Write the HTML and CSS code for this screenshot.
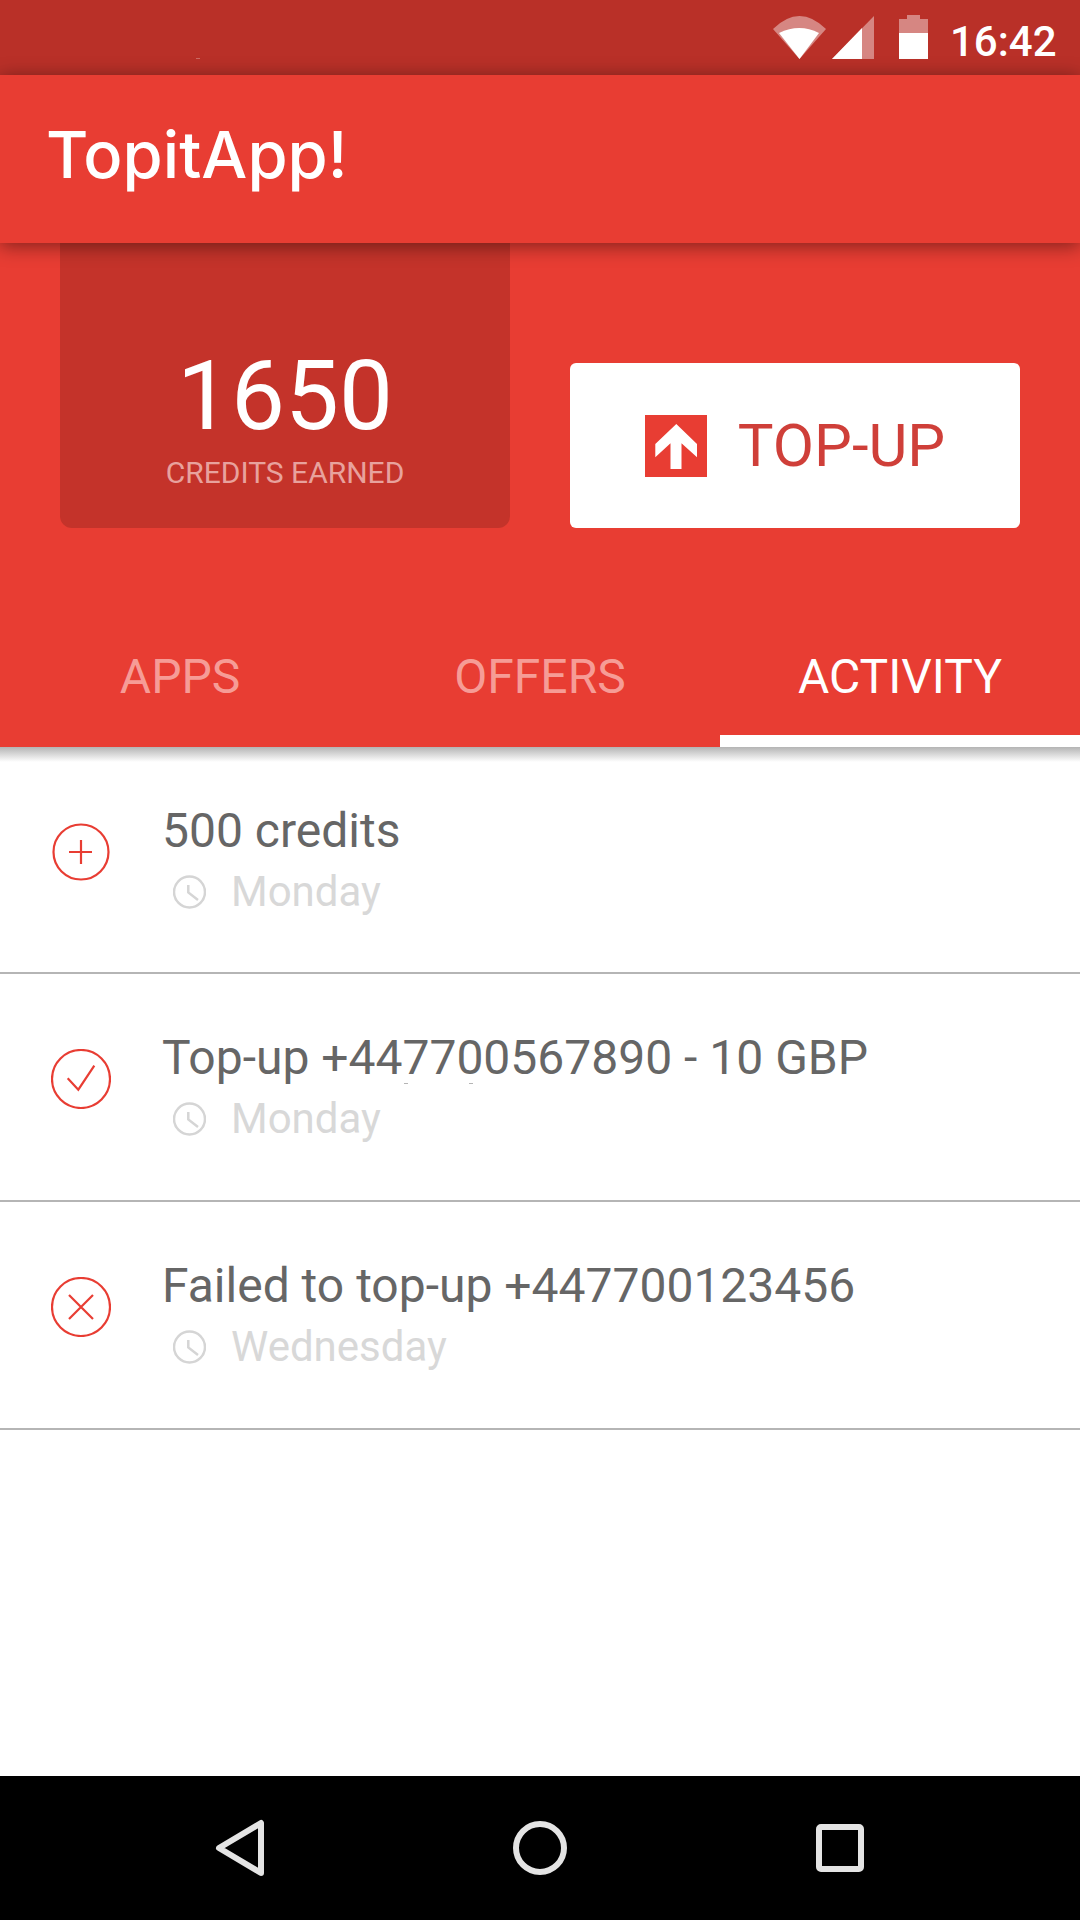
FILE: index.html
```html
<!DOCTYPE html>
<html lang="en">

<head>
    <meta charset="UTF-8">
    <meta name="viewport" content="width=device-width, initial-scale=1.0">
    <title>TopitApp!</title>
    <link rel="stylesheet" href="styles.css">
</head>

<body>
    <div class="status-bar">
        <span class="speck status-speck"></span>
        <svg class="status-icon" width="53" height="43" viewBox="0 0 53 43">
            <path class="dim" d="M0 13 Q26.500 -13 53 13 L26.500 43 Z" />
            <path class="solid" d="M6 17 Q26.500 7 46 17 L26.500 43 Z" />
        </svg>
        <svg class="status-icon" width="42" height="43" viewBox="0 0 42 43">
            <path class="dim" d="M42 0 V43 H0 Z" />
            <path class="solid" d="M30 12 V43 H0 Z" />
        </svg>
        <svg class="status-icon battery" width="29" height="44" viewBox="0 0 29 44">
            <path class="dim" d="M8 0 H21 V4 H29 V18 H0 V4 H8 Z" />
            <rect class="solid" x="0" y="18" width="29" height="26" />
        </svg>
        <span class="clock-text">16:42</span>
    </div>

    <header class="app-bar">
        <h1>TopitApp!</h1>
    </header>

    <section class="hero">
        <div class="credits-card">
            <div class="credits-value">1650</div>
            <div class="credits-label">CREDITS EARNED</div>
        </div>
        <button class="topup-button" type="button">
            <svg width="62" height="62" viewBox="0 0 62 62">
                <rect width="62" height="62" fill="#e83d33" />
                <path fill="#fff" d="M31.300 9 L52 29 V42.300 L36.500 28.300 V54 H25.500 V28.300 L10.300 42.300 V29 Z" />
            </svg>
            <span>TOP-UP</span>
        </button>
    </section>

    <nav class="tabs">
        <div class="tab">APPS</div>
        <div class="tab">OFFERS</div>
        <div class="tab active">ACTIVITY</div>
    </nav>

    <main class="activity">
        <div class="row">
            <svg class="row-icon" width="60" height="60" viewBox="0 0 60 60">
                <circle cx="30" cy="30" r="27.500" />
                <path d="M18 30 H41 M30 18 V42" />
            </svg>
            <div class="row-text">
                <div class="row-title">500 credits</div>
                <div class="row-time">
                    <svg width="33" height="34" viewBox="0 0 33 34">
                        <circle cx="16.500" cy="17" r="15.500" />
                        <path d="M15.300 10 V17.500 L25 25" />
                    </svg>
                    <span>Monday</span>
                </div>
            </div>
        </div>
        <div class="row">
            <svg class="row-icon" width="60" height="60" viewBox="0 0 60 60">
                <circle cx="30" cy="30" r="29" />
                <path d="M16.700 29.300 L27.300 40.700 L43.300 16.700" />
            </svg>
            <div class="row-text">
                <div class="row-title">Top-up +447700567890 - 10 GBP</div>
                <span class="speck title-speck-a"></span>
                <span class="speck title-speck-b"></span>
                <div class="row-time">
                    <svg width="33" height="34" viewBox="0 0 33 34">
                        <circle cx="16.500" cy="17" r="15.500" />
                        <path d="M15.300 10 V17.500 L25 25" />
                    </svg>
                    <span>Monday</span>
                </div>
            </div>
        </div>
        <div class="row">
            <svg class="row-icon" width="60" height="60" viewBox="0 0 60 60">
                <circle cx="30" cy="30" r="29" />
                <path d="M18 18 L42 42 M42 18 L18 42" />
            </svg>
            <div class="row-text">
                <div class="row-title">Failed to top-up +447700123456</div>
                <div class="row-time">
                    <svg width="33" height="34" viewBox="0 0 33 34">
                        <circle cx="16.500" cy="17" r="15.500" />
                        <path d="M15.300 10 V17.500 L25 25" />
                    </svg>
                    <span>Wednesday</span>
                </div>
            </div>
        </div>
    </main>

    <footer class="nav-bar">
        <svg width="50" height="58" viewBox="0 0 50 58">
            <path d="M46 4 V54 L4 29 Z" />
        </svg>
        <svg width="54" height="54" viewBox="0 0 54 54">
            <circle cx="27" cy="27" r="24" />
        </svg>
        <svg width="48" height="48" viewBox="0 0 48 48">
            <rect x="3" y="3" width="42" height="42" rx="2" />
        </svg>
    </footer>
</body>

</html>
```

FILE: styles.css
```css
* {
    box-sizing: border-box;
}

body {
    position: relative;
    margin: 0;
    width: 1080px;
    height: 1920px;
    display: flex;
    flex-direction: column;
    font-family: 'Roboto', sans-serif;
    background-color: #fff;
    overflow: hidden;
}

.status-bar {
    height: 75px;
    flex: none;
    display: flex;
    align-items: flex-start;
    padding: 15px 0 0 773px;
    background-color: #b93028;
    color: #fff;
}

.status-icon {
    margin-right: 6px;
    margin-top: 1px;
}

.status-icon .dim {
    fill: rgba(255, 255, 255, 0.42);
}

.status-icon .solid {
    fill: #fff;
}

.status-icon.battery {
    margin: 0 22px 0 19px;
}

.clock-text {
    font-size: 42px;
    font-weight: 500;
    line-height: 49px;
    margin-top: 2px;
}

/* stray marks that are in the screenshot */
.speck {
    position: absolute;
    width: 4px;
    height: 1px;
    background-color: #b5b5b5;
}

.status-speck {
    left: 196px;
    top: 58px;
    background-color: #cc6a63;
}

.title-speck-a {
    left: 404px;
    top: 1083px;
}

.title-speck-b {
    left: 469px;
    top: 1083px;
}

.app-bar {
    position: relative;
    z-index: 2;
    height: 168px;
    flex: none;
    display: flex;
    align-items: center;
    padding: 0 0 9px 46px;
    background-color: #e83d33;
    box-shadow: 0 3px 18px rgba(0, 0, 0, 0.45);
}

.app-bar h1 {
    margin: 0;
    font-family: 'Inter', sans-serif;
    font-size: 65px;
    font-weight: 500;
    line-height: 70px;
    color: #fff;
}

.hero {
    height: 285px;
    flex: none;
    display: flex;
    align-items: flex-end;
    gap: 60px;
    padding: 0 60px;
    background-color: #e83d33;
}

.credits-card {
    width: 450px;
    height: 285px;
    padding-top: 97px;
    border-radius: 0 0 12px 12px;
    background-color: #c4332a;
    color: #fff;
    text-align: center;
}

.credits-value {
    font-size: 96px;
    line-height: 112px;
}

.credits-label {
    font-size: 30px;
    line-height: 35px;
    margin-top: 3px;
    color: #e8a29d;
}

.topup-button {
    width: 450px;
    height: 165px;
    display: flex;
    align-items: center;
    justify-content: center;
    gap: 31px;
    padding: 0;
    border: none;
    border-radius: 6px;
    background-color: #fff;
    font-family: inherit;
    font-size: 60px;
    color: #cf3f39;
}

.tabs {
    height: 219px;
    flex: none;
    display: grid;
    grid-template-columns: repeat(3, 1fr);
    background-color: #e83d33;
}

.tab {
    height: 107px;
    margin-top: 112px;
    padding-top: 9px;
    border-bottom: 12px solid transparent;
    font-size: 48px;
    line-height: 56px;
    text-align: center;
    color: #f69c96;
}

.tab.active {
    border-bottom-color: #fff;
    color: #fff;
}

.activity {
    flex: 1;
    background: linear-gradient(#b4b4b4, #fff) top / 100% 15px no-repeat;
}

.row {
    height: 228px;
    display: flex;
    align-items: flex-start;
    padding-left: 51px;
    border-bottom: 2px solid #b5b5b5;
}

.row:first-child {
    height: 227px;
}

.row-icon {
    flex: none;
    margin-top: 75px;
}

.row-icon circle,
.row-icon path {
    fill: none;
    stroke: #e83d33;
    stroke-width: 2.200;
}

.row-text {
    margin-left: 51px;
    padding-top: 56px;
}

.row-title {
    font-size: 48px;
    line-height: 56px;
    color: #666;
}

.row-time {
    display: flex;
    align-items: center;
    gap: 25px;
    margin-top: 8px;
    padding-left: 11px;
    font-size: 42px;
    line-height: 49px;
    color: #d8d8d8;
}

.row-time circle,
.row-time path {
    fill: none;
    stroke: #d5d5d5;
    stroke-width: 2.500;
}

.nav-bar {
    height: 144px;
    flex: none;
    display: grid;
    grid-template-columns: repeat(3, 300px);
    justify-content: center;
    justify-items: center;
    align-items: center;
    background-color: #000;
}

.nav-bar path,
.nav-bar circle,
.nav-bar rect {
    fill: none;
    stroke: #e4e4e4;
    stroke-width: 6;
    stroke-linejoin: round;
}
```
